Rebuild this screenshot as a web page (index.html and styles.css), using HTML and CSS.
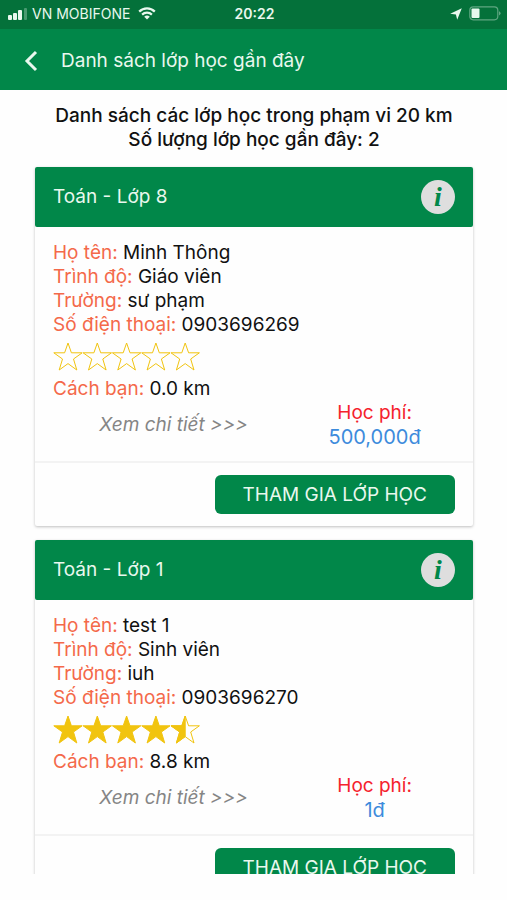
FILE: index.html
```html
<!DOCTYPE html>
<html lang="vi">
<head>
<meta charset="utf-8">
<meta name="viewport" content="width=device-width, initial-scale=1">
<title>Danh sách lớp học gần đây</title>
<link rel="stylesheet" href="styles.css">
</head>
<body>
<svg class="defs" aria-hidden="true">
  <defs>
    <path id="star" d="M15 1 18.4 10.8H29.2L20.5 17 23.8 28 15 21.6 6.2 28 9.5 17 .8 10.8H11.6Z"/>
    <path id="half-star" d="M15 1V21.6L6.2 28 9.5 17 .8 10.8H11.6Z"/>
  </defs>
</svg>
<div class="app">
  <div class="status">
    <div class="status-left">
      <svg class="signal" viewBox="0 0 20 12" aria-hidden="true">
        <rect x="0" y="7" width="4" height="5" rx="1"/>
        <rect x="5" y="5" width="4" height="7" rx="1"/>
        <rect x="10" y="2" width="4" height="10" rx="1"/>
        <rect x="16" y="0" width="3" height="12" rx="1" opacity=".3"/>
      </svg>
      <span>VN MOBIFONE</span>
      <svg class="wifi" viewBox="0 0 18 13" aria-hidden="true">
        <path d="M1.2 4.6a11 11 0 0 1 15.6 0M4.1 7.6a7 7 0 0 1 9.8 0" fill="none" stroke="currentColor" stroke-width="2.2"/>
        <path d="M6.2 9.8a4 4 0 0 1 5.6 0L9 12.6Z"/>
      </svg>
    </div>
    <span class="time">20:22</span>
    <div class="status-right">
      <svg class="location" viewBox="0 0 12 12" aria-hidden="true"><path d="M11.8.2 7.2 11.8 5.9 6.6.2 5.8Z"/></svg>
      <svg class="battery" viewBox="0 0 32 15" aria-hidden="true">
        <rect x=".8" y=".8" width="28" height="13" rx="3.5" fill="none" stroke="currentColor" stroke-width="1.2" opacity=".4"/>
        <rect x="2.5" y="2.5" width="8" height="9.6" rx="1"/>
        <path d="M30.2 5.2a2.4 2.4 0 0 1 0 4.2Z" opacity=".5"/>
      </svg>
    </div>
  </div>
  <header class="navbar">
    <button class="back" type="button" aria-label="Quay lại">
      <svg viewBox="0 0 14 22" aria-hidden="true"><path d="M12 2 3 11l9 9" fill="none" stroke="currentColor" stroke-width="3"/></svg>
    </button>
    <h1>Danh sách lớp học gần đây</h1>
  </header>
  <main class="content">
    <p class="summary">Danh sách các lớp học trong phạm vi 20 km<br>Số lượng lớp học gần đây: 2</p>

    <article class="card">
      <div class="card-head">
        <h2>Toán - Lớp 8</h2>
        <button class="info" type="button" aria-label="Thông tin">i</button>
      </div>
      <div class="card-body">
        <dl>
          <div><dt>Họ tên:</dt> <dd>Minh Thông</dd></div>
          <div><dt>Trình độ:</dt> <dd>Giáo viên</dd></div>
          <div><dt>Trường:</dt> <dd>sư phạm</dd></div>
          <div><dt>Số điện thoại:</dt> <dd>0903696269</dd></div>
        </dl>
        <svg class="stars" viewBox="0 0 148 29" role="img" aria-label="0 / 5">
          <g class="outline">
            <use href="#star"/><use href="#star" x="29.3"/><use href="#star" x="58.6"/><use href="#star" x="87.9"/><use href="#star" x="117.2"/>
          </g>
        </svg>
        <dl>
          <div><dt>Cách bạn:</dt> <dd>0.0 km</dd></div>
        </dl>
        <div class="more">
          <a href="#">Xem chi tiết &gt;&gt;&gt;</a>
          <p class="fee">Học phí:<strong>500,000đ</strong></p>
        </div>
      </div>
      <div class="card-foot"><button class="join" type="button">THAM GIA LỚP HỌC</button></div>
    </article>

    <article class="card">
      <div class="card-head">
        <h2>Toán - Lớp 1</h2>
        <button class="info" type="button" aria-label="Thông tin">i</button>
      </div>
      <div class="card-body">
        <dl>
          <div><dt>Họ tên:</dt> <dd>test 1</dd></div>
          <div><dt>Trình độ:</dt> <dd>Sinh viên</dd></div>
          <div><dt>Trường:</dt> <dd>iuh</dd></div>
          <div><dt>Số điện thoại:</dt> <dd>0903696270</dd></div>
        </dl>
        <svg class="stars" viewBox="0 0 148 29" role="img" aria-label="4.5 / 5">
          <g class="filled">
            <use href="#star"/><use href="#star" x="29.3"/><use href="#star" x="58.6"/><use href="#star" x="87.9"/><use href="#half-star" x="117.2"/>
          </g>
          <g class="outline"><use href="#star" x="117.2"/></g>
        </svg>
        <dl>
          <div><dt>Cách bạn:</dt> <dd>8.8 km</dd></div>
        </dl>
        <div class="more">
          <a href="#">Xem chi tiết &gt;&gt;&gt;</a>
          <p class="fee">Học phí:<strong>1đ</strong></p>
        </div>
      </div>
      <div class="card-foot"><button class="join" type="button">THAM GIA LỚP HỌC</button></div>
    </article>
  </main>
</div>
</body>
</html>
```
FILE: styles.css
```css
* {
  box-sizing: border-box;
  margin: 0;
  padding: 0;
}

body {
  background: #fefefe;
  color: #111;
  font: 19px/24px Inter, "Liberation Sans", sans-serif;
}

button {
  border: 0;
  background: none;
  color: inherit;
  font: inherit;
}

svg {
  display: block;
  fill: currentColor;
}

.defs {
  position: absolute;
  width: 0;
  height: 0;
}

.app {
  display: flex;
  flex-direction: column;
  height: 100vh;
  padding-bottom: 26px;
}

.status {
  display: grid;
  grid-template-columns: 1fr auto 1fr;
  align-items: center;
  flex: none;
  height: 29px;
  padding: 0 6px 2px 8px;
  background: #04713a;
  color: #e9f8ee;
  font-size: 14px;
}

.status-left,
.status-right {
  display: flex;
  align-items: center;
  gap: 4px;
}

.status-right {
  justify-content: flex-end;
  gap: 7px;
}

.signal { width: 20px; height: 12px; }
.wifi { width: 18px; height: 13px; margin-left: 4px; }
.location { width: 12px; height: 12px; }
.battery { width: 32px; height: 15px; }

.time {
  font-weight: 600;
}

.navbar {
  display: flex;
  align-items: center;
  flex: none;
  gap: 23px;
  height: 61px;
  padding: 2px 24px 0;
  background: #018749;
  color: #e9f8ee;
}

.back svg {
  width: 14px;
  height: 22px;
}

h1,
h2 {
  font-size: 19px;
  font-weight: 400;
}

.content {
  flex: 1;
  min-height: 0;
  overflow: hidden;
  padding: 14px 34px 0 35px;
}

.summary {
  margin-bottom: 15px;
  font-weight: 500;
  text-align: center;
}

.card {
  margin-bottom: 14px;
  border-radius: 2px;
  box-shadow: 0 1px 3px rgba(0, 0, 0, .25);
}

.card-head {
  display: flex;
  align-items: center;
  justify-content: space-between;
  height: 60px;
  padding: 0 18px;
  border-radius: 2px;
  background: #018749;
  color: #e9f8ee;
}

.info {
  width: 34px;
  height: 34px;
  border-radius: 50%;
  background: #dedede;
  color: #018749;
  font: italic bold 28px/34px "Liberation Serif", serif;
}

.card-body {
  padding: 14px 18px 12px;
  border-bottom: 2px solid #f3f3f3;
}

dt,
dd {
  display: inline;
}

dt {
  color: #f4694a;
}

.stars {
  width: 148px;
  height: 29px;
  margin: 5px 0 6px;
}

.filled { fill: #f1c40f; stroke: #f1c40f; stroke-width: 1; }
.outline { fill: none; stroke: #f1c40f; stroke-width: 1; }

.more {
  display: grid;
  grid-template-columns: 3fr 2fr;
  align-items: center;
  text-align: center;
}

.more a {
  color: #858585;
  font-style: italic;
  text-decoration: none;
}

.fee {
  color: #f5222d;
}

.fee strong {
  display: block;
  color: #3d8bdc;
  font-size: 20px;
  font-weight: 400;
}

.card-foot {
  display: flex;
  justify-content: flex-end;
  padding: 12px 18px;
}

.join {
  height: 39px;
  padding: 0 28px;
  border-radius: 6px;
  background: #018749;
  color: #e9f8ee;
}
```
